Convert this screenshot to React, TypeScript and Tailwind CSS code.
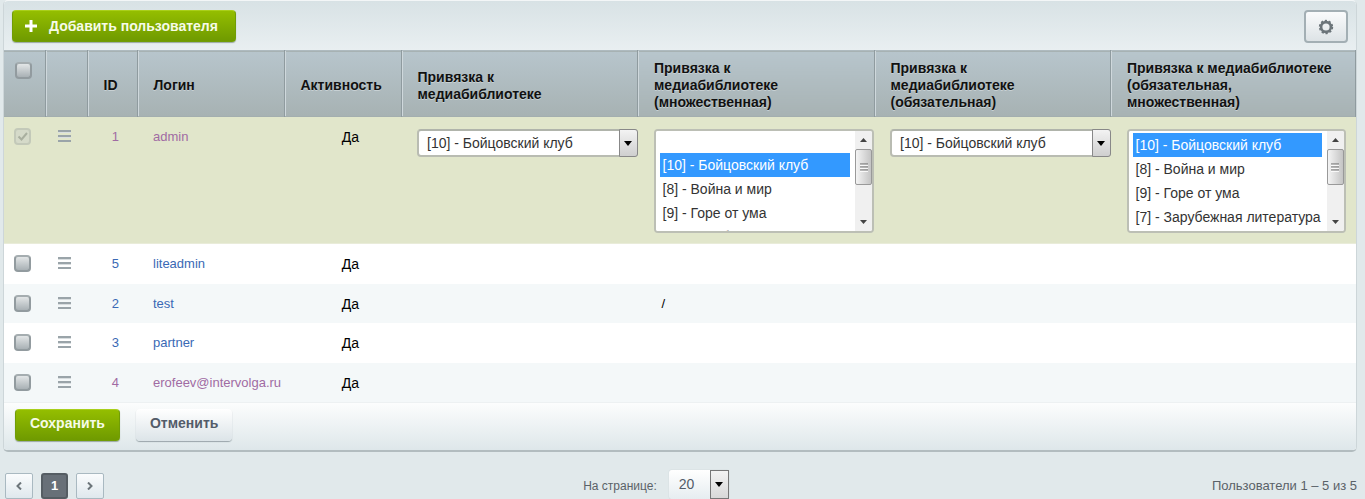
import React from "react";

type User = {
  id: number;
  login: string;
  visited?: boolean;
  note?: string;
};

const users: User[] = [
  { id: 5, login: "liteadmin" },
  { id: 2, login: "test", note: "/" },
  { id: 3, login: "partner" },
  { id: 4, login: "erofeev@intervolga.ru", visited: true },
];

const books = [
  { value: "10", label: "[10] - Бойцовский клуб" },
  { value: "8", label: "[8] - Война и мир" },
  { value: "9", label: "[9] - Горе от ума" },
  { value: "7", label: "[7] - Зарубежная литература" },
];

function Checkbox({ label }: { label: string }) {
  return (
    <input
      type="checkbox"
      aria-label={label}
      className="block size-[17px] appearance-none rounded-[4px] border-2 border-[#929b9f] border-t-[#a5adb0] bg-linear-to-b from-[#e3e6e7] to-[#a9b1b5]"
    />
  );
}

function LockedCheckbox({ label }: { label: string }) {
  return (
    <span className="relative block size-[17px]">
      <input
        type="checkbox"
        aria-label={label}
        defaultChecked
        disabled
        className="block size-[17px] appearance-none rounded-[4px] border-2 border-[#c3c9b9] bg-[#d5dac9]"
      />
      <svg viewBox="0 0 17 17" className="pointer-events-none absolute inset-0 size-[17px]" aria-hidden="true">
        <path d="M4.5 8.5l3 3 5.5-6.5" fill="none" stroke="#a9af9f" strokeWidth="2" />
      </svg>
    </span>
  );
}

function RowMenu() {
  return (
    <button type="button" aria-label="Действия" className="block">
      <svg width="13" height="12" viewBox="0 0 13 12" aria-hidden="true">
        <path d="M0 1h13M0 6h13M0 11h13" stroke="#9aa4a9" strokeWidth="2" />
        <path d="M0 2.5h13M0 7.5h13" stroke="#d9dee0" strokeWidth="1" />
      </svg>
    </button>
  );
}

function Arrow({ className }: { className: string }) {
  return (
    <span className={className}>
      <svg width="8" height="5" viewBox="0 0 8 5" aria-hidden="true">
        <path d="M0 0h8L4 5z" fill="#000" />
      </svg>
    </span>
  );
}

function BookSelect({ label }: { label: string }) {
  return (
    <div className="relative">
      <select
        aria-label={label}
        defaultValue="10"
        className="block h-7 w-full appearance-none rounded-[4px] border-2 border-[#b9bcb2] border-t-[#b0b4ab] bg-white pr-6 pl-2 text-[14px] text-[#333]"
      >
        {books.map((b) => (
          <option key={b.value} value={b.value}>
            {b.label}
          </option>
        ))}
      </select>
      <Arrow className="pointer-events-none absolute inset-y-0 right-0 flex w-[19px] items-center justify-center rounded-r-[3px] border border-[#888] bg-linear-to-b from-[#f3f3f3] to-[#cfcfcf]" />
    </div>
  );
}

function ScrollBar() {
  return (
    <div className="flex w-[17px] shrink-0 flex-col bg-[#f0f0f0]" aria-hidden="true">
      <div className="flex h-[18px] items-center justify-center">
        <svg width="7" height="4" viewBox="0 0 7 4">
          <path d="M0 4h7L3.500 0z" fill="#444" />
        </svg>
      </div>
      <div className="flex h-9 items-center justify-center rounded-[2px] border border-[#999] bg-linear-to-r from-[#f4f4f4] to-[#c4c4c4]">
        <svg width="8" height="9" viewBox="0 0 8 9">
          <path d="M0 1h8M0 4h8M0 7h8" stroke="#666" strokeWidth="1.200" />
          <path d="M0 2.300h8M0 5.300h8M0 8.300h8" stroke="#fff" strokeWidth="1" />
        </svg>
      </div>
      <div className="flex flex-1 items-end justify-center pb-[7px]">
        <svg width="7" height="4" viewBox="0 0 7 4">
          <path d="M0 0h7L3.500 4z" fill="#444" />
        </svg>
      </div>
    </div>
  );
}

function BookList({ label, optional }: { label: string; optional?: boolean }) {
  return (
    <div className="flex h-[104px] overflow-hidden rounded-[4px] border-2 border-[#bcbfb5] bg-white">
      <select
        multiple
        aria-label={label}
        defaultValue={["10"]}
        className="h-full min-w-0 flex-1 appearance-none overflow-y-scroll border-0 bg-white py-[2px] pr-[5px] pl-1 text-[14px] text-[#333] [scrollbar-width:none]"
      >
        {optional && <option value="" className="h-5 min-h-0 p-0" />}
        {books.map((b) => (
          <option
            key={b.value}
            value={b.value}
            className="h-6 px-[3px] pt-1 pb-0 checked:bg-[linear-gradient(#3399ff,#3399ff)] checked:text-white"
          >
            {b.label}
          </option>
        ))}
      </select>
      <ScrollBar />
    </div>
  );
}

function Gear() {
  return (
    <svg width="16" height="16" viewBox="0 0 16 16" aria-hidden="true">
      <circle cx="8" cy="8" r="6.300" fill="none" stroke="#6c757a" strokeWidth="1.800" strokeDasharray="2.200 1.758" />
      <circle cx="8" cy="8" r="4.900" fill="none" stroke="#6c757a" strokeWidth="2.600" />
    </svg>
  );
}

const th =
  "border-r border-r-[#8f9b9f] px-4 pt-1 text-left align-middle text-[14px] leading-[17px] font-bold text-[#111] shadow-[inset_1px_0_0_#cfd8dc] [text-shadow:0_1px_0_#c8d1d4]";

export default function App() {
  return (
    <main className="min-h-screen bg-[#e1e9eb] pr-2 pl-[3px] font-['Liberation_Sans',Arial,sans-serif] text-[13px] leading-4 text-black">
      <section className="overflow-hidden rounded-[5px] border border-b-2 border-[#cdd6d9] border-b-[#b2bcbf] border-t-[#f3f6f7] bg-white">
        <div className="flex items-start justify-between bg-linear-to-b from-[#d8e2e5] to-[#e9eff1] px-2 pt-[9px] pb-[7px]">
          <button
            type="button"
            className="mb-[1px] flex h-8 items-center gap-3 rounded-[4px] border border-[#719d05] border-t-[#a9cf1c] bg-linear-to-b from-[#94be00] to-[#6f9a00] pr-[17px] pl-3 text-[14px] font-bold text-[#f6fbe8] shadow-[0_1px_1px_#9aa8a0]"
          >
            <svg width="12" height="12" viewBox="0 0 12 12" aria-hidden="true">
              <path d="M6 0v12M0 6h12" stroke="#fff" strokeWidth="3" />
            </svg>
            Добавить пользователя
          </button>
          <button
            type="button"
            aria-label="Настройки"
            className="flex h-[33px] w-11 items-center justify-center rounded-[4px] border-2 border-[#a3afb4] bg-linear-to-b from-[#fafbfc] to-[#dde3e6]"
          >
            <Gear />
          </button>
        </div>

        <table className="w-full table-fixed border-collapse">
          <colgroup>
            <col className="w-[41px]" />
            <col className="w-[42px]" />
            <col className="w-[50px]" />
            <col className="w-[147px]" />
            <col className="w-[117px]" />
            <col className="w-[17.5%]" />
            <col className="w-[17.5%]" />
            <col className="w-[17.5%]" />
            <col />
          </colgroup>
          <thead>
            <tr className="h-[66px] border-t border-b border-t-[#aebabf] border-b-[#a3aeaf] bg-linear-to-b from-[#b7c5cc] to-[#a7b2b3]">
              <th className="border-r border-r-[#8f9b9f] px-[11px] pt-[11px] align-top">
                <Checkbox label="Выбрать все" />
              </th>
              <th className={th} aria-label="Действия" />
              <th className={th}>ID</th>
              <th className={th}>Логин</th>
              <th className={th}>Активность</th>
              <th className={`${th} pr-8`}>Привязка к медиабиблиотеке</th>
              <th className={`${th} pr-8`}>Привязка к медиабиблиотеке (множественная)</th>
              <th className={`${th} pr-8`}>Привязка к медиабиблиотеке (обязательная)</th>
              <th className={th}>Привязка к медиабиблиотеке (обязательная, множественная)</th>
            </tr>
          </thead>
          <tbody>
            <tr className="border-b border-[#e9ecd9] bg-[#e1e6cb] align-top">
              <td className="pt-[11px] pl-[10px]">
                <LockedCheckbox label="admin" />
              </td>
              <td className="pt-[13px] pl-[13px]">
                <RowMenu />
              </td>
              <td className="pt-3 pr-[18px] text-right text-[#a06ba3]">1</td>
              <td className="pt-3 pl-4">
                <a href="#admin" className="text-[#a06ba3]">admin</a>
              </td>
              <td className="pt-3 pl-4 text-center text-[14px] leading-4">Да</td>
              <td className="pt-3 pl-4">
                <BookSelect label="Привязка к медиабиблиотеке" />
              </td>
              <td className="pt-3 pb-[10px] pl-4">
                <BookList label="Привязка к медиабиблиотеке (множественная)" optional />
              </td>
              <td className="pt-3 pl-4">
                <BookSelect label="Привязка к медиабиблиотеке (обязательная)" />
              </td>
              <td className="pt-3 pr-[10px] pb-[10px] pl-4">
                <BookList label="Привязка к медиабиблиотеке (обязательная, множественная)" />
              </td>
            </tr>
            {users.map((u) => (
              <tr key={u.id} className="h-10 align-top even:bg-[#fff] odd:h-[39px] odd:bg-[#f4f8f9]">
                <td className="pt-[11px] pl-[10px]">
                  <Checkbox label={u.login} />
                </td>
                <td className="pt-[13px] pl-[13px]">
                  <RowMenu />
                </td>
                <td className={`pt-3 pr-[18px] text-right ${u.visited ? "text-[#a06ba3]" : "text-[#3a69b5]"}`}>{u.id}</td>
                <td className="pt-3 pl-4">
                  <a href={`#${u.login}`} className={u.visited ? "text-[#a06ba3]" : "text-[#3a69b5]"}>
                    {u.login}
                  </a>
                </td>
                <td className="pt-3 pl-4 text-center text-[14px] leading-4">Да</td>
                <td />
                <td className="pt-3 pl-6">{u.note}</td>
                <td />
                <td />
              </tr>
            ))}
          </tbody>
        </table>

        <div className="flex gap-4 border-t border-[#edf1f2] bg-linear-to-b from-[#fcfdfd] to-[#dee7ea] px-[11px] pt-[6px] pb-[9px]">
          <button
            type="button"
            className="h-8 rounded-[4px] border border-[#719d05] border-t-[#a9cf1c] bg-linear-to-b from-[#94be00] to-[#6f9a00] px-[14px] pb-1 text-[14px] font-bold text-[#f6fbe8] shadow-[0_1px_1px_#9aa8a0]"
          >
            Сохранить
          </button>
          <button
            type="button"
            className="h-8 rounded-[4px] bg-linear-to-b from-[#ffffff] to-[#dce4e8] px-[14px] pb-1 text-[14px] font-bold text-[#535c69] shadow-[0_1px_1px_#9aa5aa]"
          >
            Отменить
          </button>
        </div>
      </section>

      <footer className="grid grid-cols-3 items-start pt-[18px] text-[#5a6268]">
        <nav aria-label="Страницы" className="flex gap-2 pt-[3px] pl-[2px]">
          <button
            type="button"
            aria-label="Предыдущая"
            className="flex h-[26px] w-7 items-center justify-center rounded-[2px] border border-[#a9b9c1] bg-linear-to-b from-[#fafcfd] to-[#dfe8ed]"
          >
            <svg width="6" height="8" viewBox="0 0 6 8" aria-hidden="true">
              <path d="M5 0.500L1.500 4 5 7.500" fill="none" stroke="#6c757a" strokeWidth="2" />
            </svg>
          </button>
          <button
            type="button"
            aria-current="page"
            className="h-[26px] w-[27px] rounded-[3px] border-2 border-[#555d63] bg-[#687078] text-[13px] font-bold text-white"
          >
            1
          </button>
          <button
            type="button"
            aria-label="Следующая"
            className="flex h-[26px] w-7 items-center justify-center rounded-[2px] border border-[#a9b9c1] bg-linear-to-b from-[#fafcfd] to-[#dfe8ed]"
          >
            <svg width="6" height="8" viewBox="0 0 6 8" aria-hidden="true">
              <path d="M1 0.500L4.500 4 1 7.500" fill="none" stroke="#6c757a" strokeWidth="2" />
            </svg>
          </button>
        </nav>
        <div className="flex items-center justify-center gap-3 pr-12">
          <label htmlFor="page-size" className="pt-1 text-[12px]">
            На странице:
          </label>
          <div className="relative w-[60px]">
            <select
              id="page-size"
              defaultValue="20"
              className="block h-[29px] w-full appearance-none rounded-[3px] bg-linear-to-b from-[#ffffff] to-[#e6edf0] pl-[10px] text-[14px] text-[#535c69] shadow-[0_0_1px_#a9b5ba]"
            >
              <option>20</option>
              <option>50</option>
              <option>100</option>
            </select>
            <Arrow className="pointer-events-none absolute inset-y-0 right-0 flex w-[19px] items-center justify-center border border-[#777] bg-linear-to-b from-[#f3f3f3] to-[#d8d8d8]" />
          </div>
        </div>
        <p className="pt-2 text-right">Пользователи 1 – 5 из 5</p>
      </footer>
    </main>
  );
}
